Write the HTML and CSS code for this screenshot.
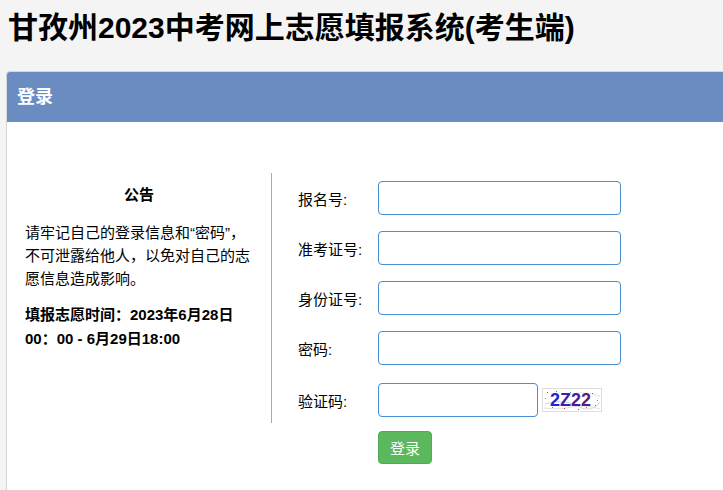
FILE: index.html
```html
<!DOCTYPE html>
<html lang="zh-CN">
<head>
<meta charset="utf-8">
<title>甘孜州2023中考网上志愿填报系统(考生端)</title>
<link rel="stylesheet" href="styles.css">
</head>
<body>
<h1 class="title">甘孜州2023中考网上志愿填报系统(考生端)</h1>
<div class="panel">
  <div class="panel-heading">登录</div>
  <div class="panel-body">
    <div class="notice">
      <div class="notice-title">公告</div>
      <p class="notice-text">请牢记自己的登录信息和“密码”，不可泄露给他人，以免对自己的志愿信息造成影响。</p>
      <p class="notice-time">填报志愿时间：2023年6月28日00：00 - 6月29日18:00</p>
    </div>
    <form class="login-form">
      <div class="row"><label class="label">报名号:</label><input class="field" type="text"></div>
      <div class="row"><label class="label">准考证号:</label><input class="field" type="text"></div>
      <div class="row"><label class="label">身份证号:</label><input class="field" type="text"></div>
      <div class="row"><label class="label">密码:</label><input class="field" type="password"></div>
      <div class="row row-captcha"><label class="label">验证码:</label><input class="field field-short" type="text">
        <svg class="captcha" width="60" height="24" viewBox="0 0 60 24">
          <rect x="0.5" y="0.5" width="59" height="23" fill="#fff" stroke="#bbb" stroke-dasharray="1 1"/>
          <path d="M3 16 Q20 10 35 18 T58 14" stroke="#ccc" fill="none" stroke-width="0.8"/>
          <path d="M2 20 Q18 22 30 19 T58 21" stroke="#d8d8d8" fill="none" stroke-width="0.8"/>
          <path d="M30 6 Q40 3 58 8" stroke="#ddd" fill="none" stroke-width="0.8"/>
          <g fill="#e33">
            <rect x="5" y="4" width="1" height="1"/><rect x="22" y="20" width="1" height="1"/><rect x="50" y="5" width="1" height="1"/>
          </g>
          <g fill="#3a3">
            <rect x="10" y="19" width="1" height="1"/><rect x="44" y="19" width="1" height="1"/><rect x="55" y="12" width="1" height="1"/>
          </g>
          <g fill="#c3c">
            <rect x="14" y="3" width="1" height="1"/><rect x="36" y="21" width="1" height="1"/><rect x="53" y="17" width="1" height="1"/>
          </g>
          <g fill="#39c">
            <rect x="3" y="10" width="1" height="1"/><rect x="28" y="4" width="1" height="1"/><rect x="47" y="10" width="1" height="1"/>
          </g>
          <text x="8" y="18" class="cap-t1">2</text>
          <text x="18" y="18" class="cap-t2">Z</text>
          <text x="29" y="18" class="cap-t3">2</text>
          <text x="39" y="18" class="cap-t4">2</text>
        </svg>
      </div>
      <div class="row row-btn"><span class="label"></span><button class="btn" type="button">登录</button></div>
    </form>
  </div>
</div>
</body>
</html>
```
FILE: styles.css
```css
html { overflow-x: hidden; }
body {
  margin: 0;
  background: #f4f4f4;
  font-family: "Liberation Sans", "Noto Sans CJK SC", sans-serif;
  color: #000;
}
.title {
  margin: 0;
  padding: 8px 8px 0;
  font-size: 30px;
  line-height: 40px;
  font-weight: bold;
  white-space: nowrap;
}
.panel {
  margin: 23px 0 0 6px;
  border: 1px solid #d6d6d6;
  border-right: 0;
  border-radius: 4px 0 0 0;
  background: #fff;
  height: 440px;
}
.panel-heading {
  height: 50px;
  line-height: 50px;
  background: #6b8cc0;
  color: #fff;
  font-size: 18px;
  font-weight: bold;
  padding-left: 10px;
  border-radius: 3px 0 0 0;
}
.panel-body {
  display: flex;
  align-items: flex-start;
  padding-top: 51px;
}
.notice {
  width: 228px;
  height: 250px;
  padding: 0 18px;
  border-right: 1px solid #aaa;
  font-size: 15px;
  flex-shrink: 0;
}
.notice-title {
  margin-top: 10px;
  text-align: center;
  font-weight: bold;
  line-height: 23px;
}
.notice-text {
  margin: 15px 0 0;
  line-height: 23px;
}
.notice-time {
  margin: 13px 0 0;
  line-height: 24px;
  font-weight: bold;
}
.login-form {
  padding: 8px 0 0 26px;
}
.row {
  display: flex;
  align-items: center;
  height: 34px;
  margin-bottom: 16px;
}
.row-captcha { margin-top: 18px; margin-bottom: 14px; }
.label {
  width: 80px;
  font-size: 15px;
  flex-shrink: 0;
}
.field {
  box-sizing: border-box;
  width: 243px;
  height: 34px;
  border: 1px solid #4a8ed2;
  border-radius: 4px;
  margin: 0;
  padding: 0 8px;
  background: #fff;
}
.field-short { width: 160px; }
.captcha { margin-left: 4px; }
.captcha text {
  font-family: "Liberation Sans", sans-serif;
  font-weight: bold;
  font-size: 18px;
}
.cap-t1 { fill: #2424d0; }
.cap-t2 { fill: #3a1fb0; }
.cap-t3 { fill: #4a1aa0; }
.cap-t4 { fill: #5a1a88; }
.row-btn { height: 33px; }
.btn {
  width: 54px;
  height: 33px;
  border: 1px solid #4cae4c;
  border-radius: 4px;
  background: #5cb85c;
  color: #fff;
  font-size: 15px;
  font-family: "Liberation Sans", "Noto Sans CJK SC", sans-serif;
  padding: 0;
}
```
